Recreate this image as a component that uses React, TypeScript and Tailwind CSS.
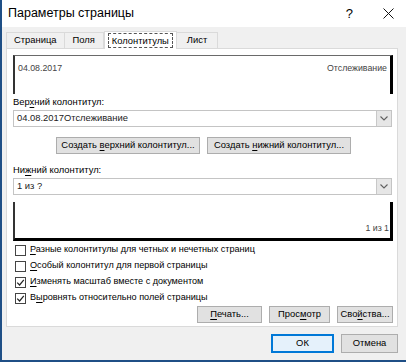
import type { ReactNode } from 'react';

const font = { fontFamily: '"Liberation Sans", Arial, sans-serif' };

const U = ({ children }: { children: ReactNode }) => <span className="underline underline-offset-[1.5px]">{children}</span>;

function Btn({ children, className = '' }: { children: ReactNode; className?: string }) {
  return (
    <div
      className={`flex h-[17px] items-center justify-center border border-[#adadad] bg-[#e1e1e1] text-[9.4px] text-black ${className}`}
    >
      <span className="whitespace-nowrap">{children}</span>
    </div>
  );
}

function Chevron() {
  return (
    <div className="flex h-full w-[15px] items-center justify-center border-l border-[#c8c8c8] bg-[#e6e6e6]">
      <svg width="8" height="5" viewBox="0 0 8 5">
        <path d="M0.5 0.5 L4 4 L7.5 0.5" fill="none" stroke="#606060" strokeWidth="1.1" />
      </svg>
    </div>
  );
}

function Select({ value }: { value: string }) {
  return (
    <div className="flex h-[17px] items-center border border-[#c4c4c4] bg-white">
      <div className="flex-1 pl-[3px] text-[9.4px] text-[#222]">{value}</div>
      <Chevron />
    </div>
  );
}

function Check({ checked, children }: { checked?: boolean; children: ReactNode }) {
  return (
    <div className="flex h-[16px] items-center gap-[4px] text-[9.1px] text-black">
      <div className="flex h-[11px] w-[11px] items-center justify-center border border-[#444] bg-white">
        {checked ? (
          <svg width="9" height="9" viewBox="0 0 9 9">
            <path d="M1.2 4.6 L3.6 7 L7.8 1.8" fill="none" stroke="#222" strokeWidth="1.2" />
          </svg>
        ) : null}
      </div>
      <span className="whitespace-nowrap">{children}</span>
    </div>
  );
}

export default function App() {
  return (
    <div
      className="flex h-[362px] w-[406px] flex-col border-b-2 border-l-2 border-[#1f4f86] bg-[#f0f0f0]"
      style={font}
    >
      {/* title bar */}
      <div className="flex h-[27px] items-center bg-white pl-[6px] pr-[12px] text-[12.5px] text-black">
        <span className="flex-1">Параметры страницы</span>
        <span className="mr-[30px] text-[13px]">?</span>
        <svg width="11" height="11" viewBox="0 0 11 11">
          <path d="M0.5 0.5 L10.5 10.5 M10.5 0.5 L0.5 10.5" stroke="#111" strokeWidth="1" />
        </svg>
      </div>

      {/* tabs */}
      <div className="mt-[4px] flex h-[17px] items-end pl-[4px] text-[9.4px] text-black">
        <div className="flex h-[16px] items-center border border-b-0 border-[#dadada] px-[7px]">Страница</div>
        <div className="flex h-[16px] items-center border border-b-0 border-l-0 border-[#dadada] px-[8px]">Поля</div>
        <div className="relative -mb-px flex h-[18px] items-center border border-b-0 border-[#dadada] bg-white px-[3px]">
          <span className="border border-dashed border-[#555] px-[3px] leading-[13px]">Колонтитулы</span>
        </div>
        <div className="flex h-[16px] items-center border border-b-0 border-l-0 border-[#dadada] px-[10px]">Лист</div>
      </div>

      {/* panel */}
      <div className="mx-[4px] flex h-[279px] w-[392px] flex-col border border-[#dadada] bg-white px-[6px] pt-[6px] text-[9.4px] text-black">
        <div className="flex h-[39px] w-[380px] justify-between border-t border-l-2 border-r-[3px] border-t-[#6a6a6a] border-l-[#333] border-r-black px-[3px] pt-[6px] text-[8.8px] text-[#444]">
          <span>04.08.2017</span>
          <span>Отслеживание</span>
        </div>
        <div className="mt-[1px] flex h-[14px] items-center">
          <span>
            Вер<U>х</U>ний колонтитул:
          </span>
        </div>
        <div className="mt-[1px] w-[379px]">
          <Select value="04.08.2017Отслеживание" />
        </div>
        <div className="mt-[10px] flex gap-[7px] pl-[43px]">
          <Btn className="w-[144px]">
            Создать <U>в</U>ерхний колонтитул...
          </Btn>
          <Btn className="w-[144px]">
            Создать <U>н</U>ижний колонтитул...
          </Btn>
        </div>
        <div className="mt-[9px] flex h-[14px] items-center">
          <span>
            Ни<U>ж</U>ний колонтитул:
          </span>
        </div>
        <div className="mt-[1px] w-[379px]">
          <Select value="1 из ?" />
        </div>
        <div className="mt-[7px] flex h-[39px] w-[380px] items-end justify-end border-b-[3px] border-l-2 border-r-[3px] border-b-black border-l-[#333] border-r-black pb-[3px] pr-[1px] text-[8.8px] text-[#444]">
          1 из 1
        </div>
        <div className="mt-[1px] pl-[2px]">
          <Check>
            <U>Р</U>азные колонтитулы для четных и нечетных страниц
          </Check>
          <Check>
            <U>О</U>собый колонтитул для первой страницы
          </Check>
          <Check checked>
            <U>И</U>зменять масштаб вместе с документом
          </Check>
          <Check checked>
            В<U>ы</U>ровнять относительно полей страницы
          </Check>
        </div>
        <div className="flex w-[380px] justify-end gap-[7px]">
          <Btn className="w-[65px]">
            <U>П</U>ечать...
          </Btn>
          <Btn className="w-[61px]">
            Прос<U>м</U>отр
          </Btn>
          <Btn className="w-[56px]">
            Сво<U>й</U>ства...
          </Btn>
        </div>
      </div>

      {/* bottom */}
      <div className="mt-[7px] flex justify-end gap-[7px] pr-[8px]">
        <div className="flex h-[19px] w-[63px] items-center justify-center border-2 border-[#0078d7] bg-[#e5f1fb] text-[9.4px]">
          ОК
        </div>
        <Btn className="h-[19px] w-[57px]">Отмена</Btn>
      </div>
    </div>
  );
}
